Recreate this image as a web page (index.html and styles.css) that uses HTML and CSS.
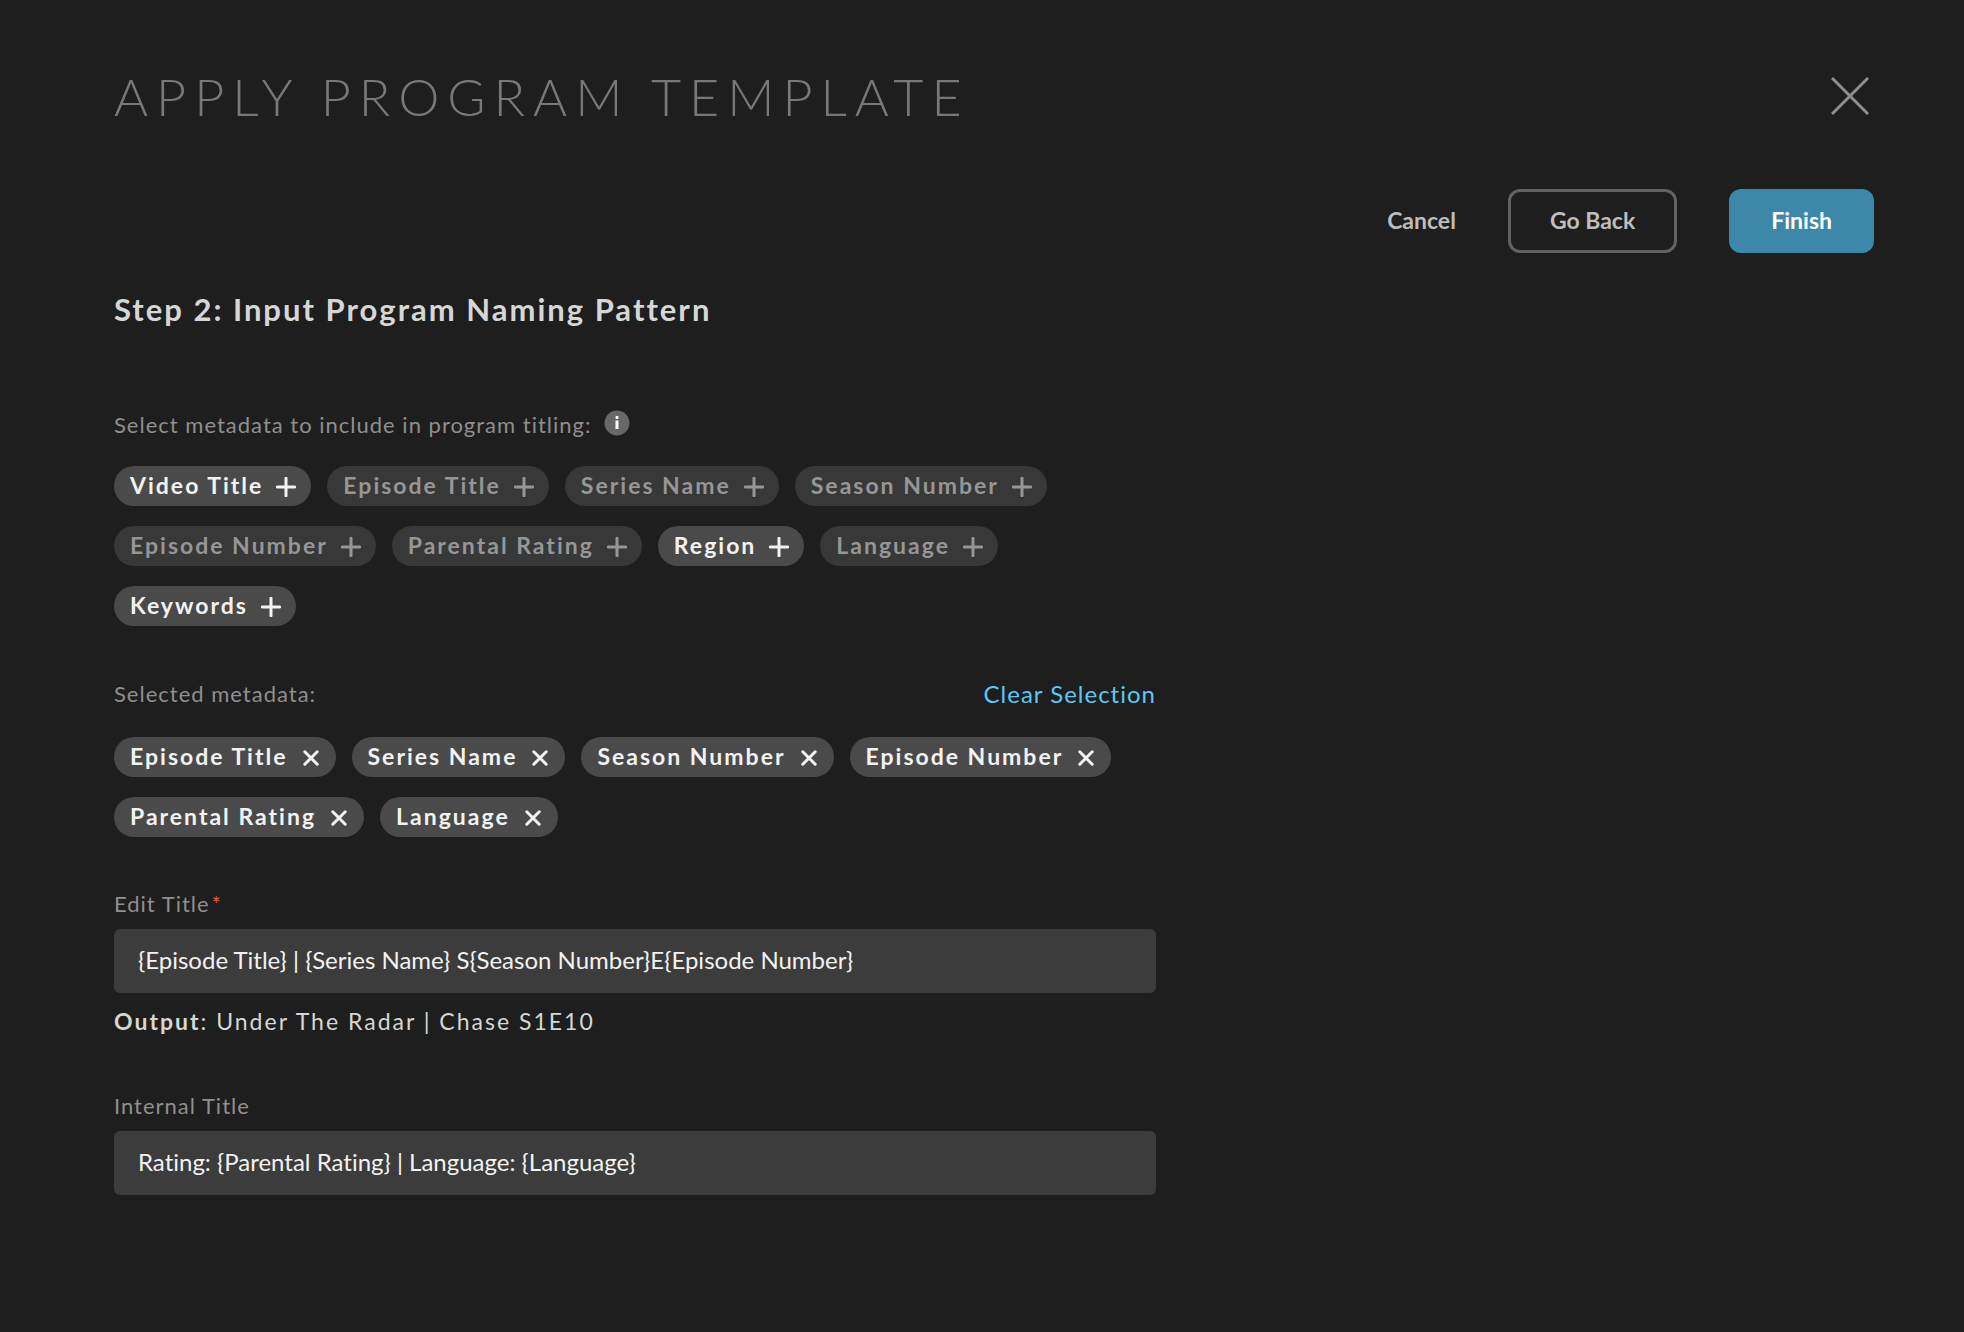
FILE: index.html
```html
<!DOCTYPE html>
<html lang="en">
<head>
<meta charset="utf-8">
<meta name="viewport" content="width=device-width, initial-scale=1">
<title>Apply Program Template</title>
<link rel="stylesheet" href="styles.css">
</head>
<body>
<svg class="sprite" aria-hidden="true">
  <symbol id="icon-plus" viewBox="0 0 20 20"><path d="M10 1.2v17.6M1.2 10h17.6" fill="none" stroke="currentColor" stroke-width="3" stroke-linecap="round"/></symbol>
  <symbol id="icon-remove" viewBox="0 0 16 16"><path d="M1.8 1.8l12.4 12.4M14.2 1.8L1.8 14.2" fill="none" stroke="currentColor" stroke-width="3" stroke-linecap="round"/></symbol>
</svg>
<main class="dialog">
  <header class="header">
    <h1 class="title">APPLY PROGRAM TEMPLATE</h1>
    <button class="close" type="button" aria-label="Close">
      <svg width="38" height="38" viewBox="0 0 38 38"><path d="M1 1l36 36M37 1L1 37" fill="none" stroke="currentColor" stroke-width="3"/></svg>
    </button>
  </header>

  <div class="actions">
    <button class="btn btn-text" type="button">Cancel</button>
    <button class="btn btn-outline" type="button">Go Back</button>
    <button class="btn btn-primary" type="submit" form="naming">Finish</button>
  </div>

  <form class="form" id="naming">
    <h2 class="step">Step 2: Input Program Naming Pattern</h2>

    <section class="group">
      <div class="group-head">
        <p class="label">Select metadata to include in program titling:</p>
        <button class="info" type="button" aria-label="More information">
          <svg width="26" height="26" viewBox="0 0 26 26"><circle cx="13" cy="13" r="12.5" fill="#686868"/><rect x="11.5" y="6" width="3" height="3" rx="1" fill="#fff"/><rect x="11.5" y="10.5" width="3" height="8.500" fill="#fff"/></svg>
        </button>
      </div>
      <div class="chips">
        <button class="chip" type="button">Video Title<svg class="plus"><use href="#icon-plus"/></svg></button>
        <button class="chip" type="button" disabled>Episode Title<svg class="plus"><use href="#icon-plus"/></svg></button>
        <button class="chip" type="button" disabled>Series Name<svg class="plus"><use href="#icon-plus"/></svg></button>
        <button class="chip" type="button" disabled>Season Number<svg class="plus"><use href="#icon-plus"/></svg></button>
        <button class="chip" type="button" disabled>Episode Number<svg class="plus"><use href="#icon-plus"/></svg></button>
        <button class="chip" type="button" disabled>Parental Rating<svg class="plus"><use href="#icon-plus"/></svg></button>
        <button class="chip" type="button">Region<svg class="plus"><use href="#icon-plus"/></svg></button>
        <button class="chip" type="button" disabled>Language<svg class="plus"><use href="#icon-plus"/></svg></button>
        <button class="chip" type="button">Keywords<svg class="plus"><use href="#icon-plus"/></svg></button>
      </div>
    </section>

    <section class="group">
      <div class="group-head spread">
        <p class="label">Selected metadata:</p>
        <a class="clear" href="#clear">Clear Selection</a>
      </div>
      <div class="chips">
        <button class="chip" type="button">Episode Title<svg class="remove"><use href="#icon-remove"/></svg></button>
        <button class="chip" type="button">Series Name<svg class="remove"><use href="#icon-remove"/></svg></button>
        <button class="chip" type="button">Season Number<svg class="remove"><use href="#icon-remove"/></svg></button>
        <button class="chip" type="button">Episode Number<svg class="remove"><use href="#icon-remove"/></svg></button>
        <button class="chip" type="button">Parental Rating<svg class="remove"><use href="#icon-remove"/></svg></button>
        <button class="chip" type="button">Language<svg class="remove"><use href="#icon-remove"/></svg></button>
      </div>
    </section>

    <div class="field">
      <label class="label" for="edit-title">Edit Title<span class="required">*</span></label>
      <input class="input" id="edit-title" type="text" value="{Episode Title} | {Series Name} S{Season Number}E{Episode Number}" required>
      <p class="output"><b>Output</b>: Under The Radar | Chase S1E10</p>
    </div>

    <div class="field">
      <label class="label" for="internal-title">Internal Title</label>
      <input class="input" id="internal-title" type="text" value="Rating: {Parental Rating} | Language: {Language}">
    </div>
  </form>
</main>
</body>
</html>
```
FILE: styles.css
```css
* {
  box-sizing: border-box;
}

body {
  margin: 0;
  background: #1e1e1e;
  color: #d6d6d6;
  font-family: Lato, "Open Sans", sans-serif;
  font-size: 22px;
  font-variant-ligatures: none;
}

h1, h2, p {
  margin: 0;
}

button, input {
  font: inherit;
  font-variant-ligatures: none;
  color: inherit;
  border: 0;
}

button {
  background: none;
  padding: 0;
  cursor: pointer;
}

svg {
  display: block;
}

.sprite {
  position: absolute;
  width: 0;
  height: 0;
}

.dialog {
  padding: 64px 90px 64px 114px;
}

.header {
  display: flex;
  align-items: center;
  justify-content: space-between;
  padding-right: 5px;
}

.title {
  font-size: 52px;
  font-weight: 300;
  line-height: 64px;
  letter-spacing: 8px;
  color: #787878;
}

.close {
  color: #8e8e8e;
}

.actions {
  display: flex;
  justify-content: flex-end;
  gap: 52px;
  margin-top: 61px;
}

.btn {
  height: 64px;
  padding: 0 0 2px;
  border-radius: 12px;
  font-size: 23px;
  font-weight: 700;
  color: #bdbdbd;
}

.btn-outline {
  border: 3px solid #626262;
  padding: 0 39px 2px;
}

.btn-primary {
  padding: 0 42px 2px;
  background: #3d88a9;
  color: #fff;
}

.form {
  max-width: 1042px;
}

.step {
  margin-top: 36px;
  font-size: 31px;
  line-height: 40px;
  font-weight: 700;
  letter-spacing: 2px;
}

.group-head {
  display: flex;
  align-items: center;
  gap: 12px;
}

.spread {
  justify-content: space-between;
}

.info {
  margin-bottom: 4px;
}

.group {
  margin-top: 53px;
}

.step + .group {
  margin-top: 81px;
}

.label {
  display: block;
  line-height: 30px;
  letter-spacing: 1px;
  color: #8f8f8f;
}

.clear {
  font-size: 24px;
  line-height: 30px;
  letter-spacing: 1px;
  color: #5ac8f5;
  text-decoration: none;
}

.chips {
  display: flex;
  flex-wrap: wrap;
  gap: 20px 16px;
  margin-top: 28px;
}

.step + .group .chips {
  margin-top: 26px;
}

.chip {
  display: flex;
  align-items: center;
  gap: 13px;
  height: 40px;
  padding: 0 15px 3px 16px;
  border-radius: 20px;
  background: #4a4a4a;
  color: #f2f2f2;
  font-size: 23px;
  font-weight: 700;
  letter-spacing: 2px;
}

.chip:disabled {
  background: #383838;
  color: #969696;
}

.plus {
  width: 20px;
  height: 20px;
  margin-top: 5px;
}

.remove {
  width: 16px;
  height: 16px;
  margin: 5px 2px 0;
}

.field {
  margin-top: 52px;
}

.field + .field {
  margin-top: 54px;
}

.required {
  margin-left: 2px;
  color: #e8593f;
}

.input {
  display: block;
  width: 100%;
  height: 64px;
  margin-top: 10px;
  padding: 0 24px 3px;
  border-radius: 6px;
  background: #3c3c3c;
  color: #f2f2f2;
  font-size: 24px;
}

.output {
  margin-top: 12px;
  font-size: 23px;
  line-height: 32px;
  letter-spacing: 2px;
}
```
